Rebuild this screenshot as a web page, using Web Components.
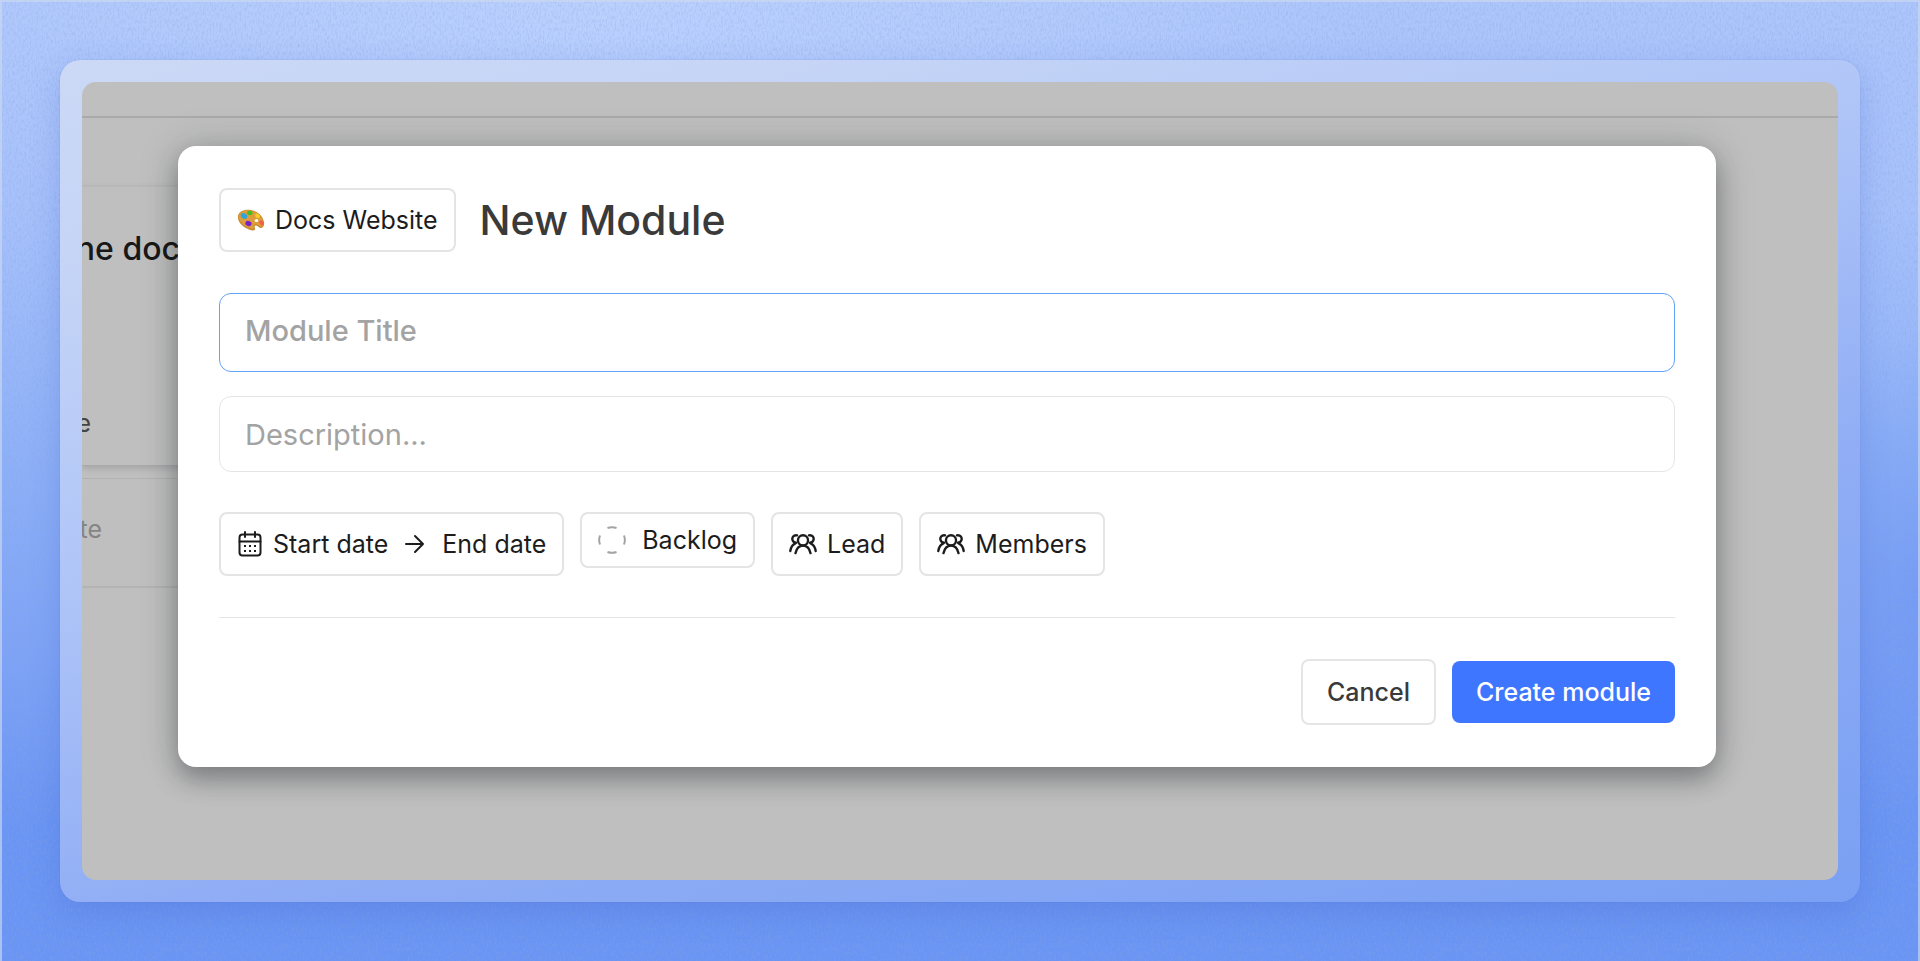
<!DOCTYPE html>
<html lang="en">
<head>
<meta charset="utf-8">
<title>New Module</title>
<style>
html, body { margin: 0; min-height: 100%; }
body { font-family: Inter, "Liberation Sans", sans-serif; color: #1f1f1f; }
</style>
</head>
<body>
<app-stage>
  <board-peek slot="behind"></board-peek>
  <module-dialog></module-dialog>
</app-stage>

<script>
const define = (name, html) => {
  const t = document.createElement('template');
  t.innerHTML = html;
  customElements.define(name, class extends HTMLElement {
    constructor() {
      super();
      this.attachShadow({ mode: 'open' }).append(t.content.cloneNode(true));
    }
  });
};

define('app-stage', `
<style>
:host { display: grid; min-height: 100vh; box-sizing: border-box;
  background:
    radial-gradient(ellipse 40% 30% at 32% 0, rgba(195,215,255,.65), transparent),
    radial-gradient(ellipse 8% 28% at 100% 62%, rgba(90,135,240,.35), transparent),
    linear-gradient(180deg, #adc6fb 0, #a7c1fb 22%, #90b2f8 45%, #7ea3f6 68%, #6a95f4 86%, #6a95f4 100%); }
:host > * { grid-area: 1 / 1; }
.grain { width: 100%; height: 100%; opacity: .28; }
.edge { border: 2px solid rgba(205,216,240,.65); border-bottom: 0; z-index: 1; pointer-events: none; }
.frame { z-index: 1; margin: 60px 60px 59px; padding: 22px; border-radius: 20px; display: grid;
  background: linear-gradient(165deg, #cbd9f6 0, #c6d5f6 15%, #afc5f8 40%, #90adf5 66%, #7aa0f3 100%);
  box-shadow: 0 0 1px rgba(90,110,200,.7), 0 10px 30px rgba(60,90,200,.25); }
.screen { display: grid; grid-template-columns: minmax(0, 1fr); border-radius: 14px; overflow: hidden; background: #bfbfbf; }
.front { grid-area: 1 / 1; min-width: 0; padding: 64px 122px 112px 96px; }
</style>
<svg class="grain" aria-hidden="true"><filter id="n" x="0" y="0" width="100%" height="100%"><feTurbulence type="fractalNoise" baseFrequency=".6 .25" numOctaves="2" seed="4"/><feColorMatrix values="0 0 0 0 .25  0 0 0 0 .38  0 0 0 0 .75  3 0 0 0 -1.3"/></filter><rect width="100%" height="100%" filter="url(#n)"/></svg>
<div class="edge"></div>
<div class="frame"><div class="screen"><slot name="behind"></slot><div class="front"><slot></slot></div></div></div>
`);

define('board-peek', `
<style>
:host { display: block; grid-area: 1 / 1; min-width: 0; color: #181818; }
.bar { height: 34px; border-bottom: 2px solid #aaa; }
.card { width: 480px; box-sizing: border-box; white-space: nowrap; }
.first { margin-top: 67px; height: 281px; border-top: 2px solid #b8b8b8; border-bottom: 1px solid #a9a9ad;
  box-shadow: 0 3px 6px rgba(0,0,0,.12); display: flex; flex-direction: column; justify-content: space-between; padding: 42px 0 26px; }
.second { margin-top: 12px; height: 110px; border-top: 1px solid #b2b2b2; border-bottom: 2px solid #b4b4b4; display: flex; align-items: center; padding-bottom: 8px; color: #858585; }
h3, p { margin: 0; display: flex; }
h3 { font-size: 32px; line-height: 40px; font-weight: 500; }
p { font-size: 25px; line-height: 32px; }
.first p { color: #444; }
.a { width: 98px; justify-content: flex-end; }
.b { width: 9px; justify-content: flex-end; }
.c { width: 20px; justify-content: flex-end; }
</style>
<div class="bar"></div>
<div class="card first"><h3 class="a">ne doc</h3><p class="b">e</p></div>
<div class="card second"><p class="c">te</p></div>
`);

define('ui-icon', `
<style>
:host { display: inline-flex; flex: none; }
svg { display: none; fill: none; stroke: currentColor; stroke-linecap: round; stroke-linejoin: round; }
:host([name=calendar]) .calendar, :host([name=arrow]) .arrow, :host([name=people]) .people,
:host([name=backlog]) .backlog, :host([name=palette]) .palette { display: block; }
</style>
<svg class="calendar" width="26" height="26" viewBox="-1 0 26 26" stroke-width="2"><rect x="1.500" y="3.500" width="21" height="21" rx="3"/><path d="M1.500 10.500h21M7 1v5M17 1v5"/><g fill="currentColor" stroke="none"><path d="M6 14h2v2H6zM11 14h2v2h-2zM16 14h2v2h-2zM6 19h2v2H6zM11 19h2v2h-2zM16 19h2v2h-2z"/></g></svg>
<svg class="arrow" width="20" height="20" viewBox="0 0 20 20" stroke-width="2"><path d="M1 10h17M10 2l8 8-8 8"/></svg>
<svg class="people" width="28" height="22" viewBox="0 0 26 20" stroke-width="2.200"><circle cx="13" cy="6.600" r="4.700"/><path d="M6 18.500C7 14 9.500 11.500 13 11.500S19 14 20 18.500M7.500 2C4 1.500 2.700 4 3.200 6c.5 2 2 2.600 3.300 2.800M6 9.500C3.300 10.500 1.800 13 1.200 16.500M18.500 2C22 1.500 23.300 4 22.800 6c-.5 2-2 2.600-3.300 2.800M20 9.500c2.700 1 4.200 3.500 4.800 7"/></svg>
<svg class="backlog" width="28" height="28" viewBox="0 0 28 28" stroke-width="2" style="stroke:#a3a3a3;stroke-linecap:butt"><path d="M9.500 2a12.500 12.500 0 0 1 9 0M26 9.500a12.500 12.500 0 0 1 0 9M18.500 26a12.500 12.500 0 0 1-9 0M2 18.500a12.500 12.500 0 0 1 0-9"/></svg>
<svg class="palette" width="28" height="22" viewBox="0 0 28 22" style="stroke:none"><path fill="#c98a2e" d="M1 7C2 2 8-.2 14 1c7 1.400 12 6.500 13 12 .6 3.500-.8 5.800-3 6-2 .2-3-2.600-5-2.600-1.600 0-1.500 1.600-1 3 .5 1.700-1 2.400-3.500 1.800C7 19.500 0 13 1 7z"/><path fill="#dd9d3a" d="M2 6.500C3.500 2 9 .6 14 1.700c6.500 1.400 11 6 12 10.800.5 3-.5 4.800-2.200 5-1.800.1-2.800-2.600-4.800-2.600-2 0-2.600 1.400-2 3.300.4 1.300-.6 1.800-2.600 1.300C8 18 .5 12 2 6.500z"/><ellipse cx="19.500" cy="11.500" rx="1.800" ry="1.600" fill="#fff"/><ellipse cx="7" cy="7" rx="3.400" ry="2.600" fill="#2aa5e0" transform="rotate(30 7 7)"/><ellipse cx="12.800" cy="4" rx="2.700" ry="2.200" fill="#3dc02c"/><ellipse cx="20.500" cy="6.800" rx="2.600" ry="2" fill="#f6cf2a" transform="rotate(35 20.500 6.800)"/><ellipse cx="24.500" cy="13.800" rx="2.700" ry="2" fill="#f2604c" transform="rotate(50 24.500 13.800)"/><ellipse cx="11.500" cy="14.500" rx="3.200" ry="2.500" fill="#7a22c9" transform="rotate(25 11.500 14.500)"/></svg>
`);

define('ui-chip', `
<style>
:host { display: block; }
button { display: flex; align-items: center; gap: var(--chip-gap, 10px); height: var(--chip-height, 64px); box-sizing: border-box; margin: 0;
  padding: 0 16px; border: 2px solid #e4e4e4; border-radius: 8px; background: #fff; font: 400 25px/32px Inter, "Liberation Sans", sans-serif; color: #1c1c1c; white-space: nowrap; }
</style>
<button type="button"><slot></slot></button>
`);

define('ui-button', `
<style>
:host { display: block; }
button { height: 66px; box-sizing: border-box; margin: 0; padding: 0 24px; border: 2px solid #e5e5e5; border-radius: 8px; background: #fff;
  font: 500 25px/32px Inter, "Liberation Sans", sans-serif; color: #3a3a3a; white-space: nowrap; }
:host([primary]) button { height: 62px; border: 0; background: #3f76ff; color: #fff; }
</style>
<button type="button"><slot></slot></button>
`);

define('module-dialog', `
<style>
:host { display: block; background: #fff; border-radius: 18px; padding: 42px 41px;
  box-shadow: 0 12px 24px rgba(25,30,35,.34), 0 0 40px rgba(25,35,35,.18); }
header, .options, footer { display: flex; }
header { align-items: center; gap: 24px; margin-bottom: 41px; }
h1 { margin: 0; font-size: 41px; line-height: 48px; font-weight: 500; color: #3a3a3a; }
input, textarea { display: block; width: 100%; box-sizing: border-box; margin: 0; padding: 0 25px; border-radius: 12px; background: #fff; outline: 0; resize: none; overflow: hidden; }
input { height: 79px; padding-bottom: 4px; border: 1px solid #60a1fa; font: 500 29px/40px Inter, "Liberation Sans", sans-serif; margin-bottom: 24px; }
textarea { height: 76px; padding-top: 18px; border: 1px solid #e5e5e5; font: 400 29px/40px Inter, "Liberation Sans", sans-serif; }
::placeholder { color: #a3a3a3; opacity: 1; }
.options { gap: 16px; align-items: flex-start; margin: 40px 0 41px; }
.backlog { --chip-height: 56px; --chip-gap: 16px; }
.arrow { margin: 0 7px; }
footer { border-top: 1px solid #e5e5e5; padding-top: 41px; gap: 16px; justify-content: flex-end; align-items: center; }
</style>
<header><ui-chip><ui-icon name="palette"></ui-icon><span>Docs Website</span></ui-chip><h1>New Module</h1></header>
<input type="text" placeholder="Module Title" aria-label="Module Title">
<textarea placeholder="Description..." aria-label="Description"></textarea>
<div class="options">
  <ui-chip><ui-icon name="calendar"></ui-icon><span>Start date</span><ui-icon class="arrow" name="arrow"></ui-icon><span>End date</span></ui-chip>
  <ui-chip class="backlog"><ui-icon name="backlog"></ui-icon><span>Backlog</span></ui-chip>
  <ui-chip><ui-icon name="people"></ui-icon><span>Lead</span></ui-chip>
  <ui-chip><ui-icon name="people"></ui-icon><span>Members</span></ui-chip>
</div>
<footer><ui-button>Cancel</ui-button><ui-button primary>Create module</ui-button></footer>
`);
</script>
</body>
</html>
